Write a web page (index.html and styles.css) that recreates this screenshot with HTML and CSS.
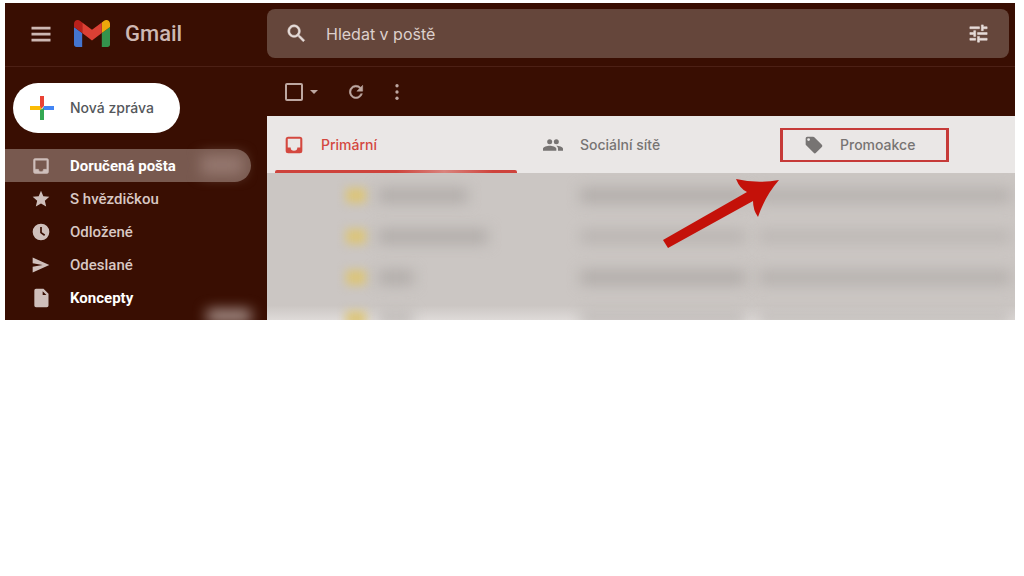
FILE: index.html
```html
<!DOCTYPE html>
<html lang="cs">
<head>
<meta charset="utf-8">
<meta name="viewport" content="width=device-width, initial-scale=1">
<title>Gmail</title>
<link rel="stylesheet" href="styles.css">
</head>
<body>
<div class="app">
  <header class="header">
    <div class="brand">
      <button class="icon-button menu-button" aria-label="Hlavní nabídka"><svg class="icon" viewBox="0 0 24 24"><path d="M2.500 4.800h19v2.600h-19zM2.500 10.800h19v2.600h-19zM2.500 16.800h19v2.600h-19z"/></svg></button>
      <svg class="logo" viewBox="52 42 88 66" aria-hidden="true"><path fill="#4475d0" d="M58 108h14V74L52 59v43c0 3.320 2.690 6 6 6"/><path fill="#34934c" d="M120 108h14c3.320 0 6-2.690 6-6V59l-20 15"/><path fill="#eda90c" d="M120 48v26l20-15v-8c0-7.420-8.470-11.650-14.400-7.200"/><path fill="#dc4034" d="M72 74V48l24 18 24-18v26L96 92"/><path fill="#b9201b" d="M52 51v8l20 15V48l-5.600-4.200c-5.940-4.450-14.400-.22-14.400 7.200"/></svg>
      <span class="brand-name">Gmail</span>
    </div>
    <form class="search" role="search">
      <button type="button" class="icon-button" aria-label="Hledat"><svg class="icon bold" viewBox="0 0 24 24"><path d="M15.500 14h-.8l-.3-.3A6.500 6.500 0 1 0 13.700 14.400l.3.3v.8l5 5 1.500-1.500zM9.500 14a4.500 4.500 0 1 1 0-9 4.500 4.500 0 0 1 0 9z"/></svg></button>
      <input class="search-input" type="text" placeholder="Hledat v poště" aria-label="Hledat v poště">
      <button type="button" class="icon-button" aria-label="Možnosti vyhledávání"><svg class="icon bold" viewBox="0 0 24 24"><path d="M3 17v2h6v-2zM3 5v2h10V5zM13 21v-2h8v-2h-8v-2h-2v6zM7 9v2H3v2h4v2h2V9zM21 13v-2H11v2zM15 9h2V7h4V5h-4V3h-2z"/></svg></button>
    </form>
  </header>
  <div class="body">
    <aside class="sidebar">
      <button class="compose"><svg class="plus" viewBox="0 0 26 26" aria-hidden="true"><path fill="#ea4335" d="M11 1h4v10l-4 4z"/><path fill="#fbbc04" d="M1 11h10l2 4H1z"/><path fill="#4285f4" d="M15 11h10v4H13z"/><path fill="#34a853" d="M11 15l4-2v12h-4z"/></svg>Nová zpráva</button>
      <nav class="nav">
        <a class="nav-item active" href="#"><svg class="icon bold" viewBox="0 0 24 24"><path d="M19 3H5a2 2 0 0 0-2 2v14a2 2 0 0 0 2 2h14a2 2 0 0 0 2-2V5a2 2 0 0 0-2-2zm0 13h-4a3 3 0 0 1-6 0H5V5h14z"/></svg>Doručená pošta<span class="count-smudge"></span></a>
        <a class="nav-item" href="#"><svg class="icon" viewBox="0 0 24 24"><path d="M12 17.300l6.200 3.700-1.600-7 5.400-4.700-7.200-.6L12 2 9.200 8.700 2 9.300 7.400 14l-1.600 7z"/></svg>S hvězdičkou</a>
        <a class="nav-item" href="#"><svg class="icon" viewBox="0 0 24 24"><path fill-rule="evenodd" d="M12 2a10 10 0 1 0 0 20 10 10 0 0 0 0-20zM11 6h2v6.200l4 2.800-1.200 1.700L11 13.200z"/></svg>Odložené</a>
        <a class="nav-item" href="#"><svg class="icon" viewBox="0 0 24 24"><path d="M2 3l20 9L2 21v-7l12-2L2 10z"/></svg>Odeslané</a>
        <a class="nav-item unread" href="#"><svg class="icon" viewBox="0 0 24 24"><path fill-rule="evenodd" d="M6 1a2 2 0 0 0-2 2v18a2 2 0 0 0 2 2h13a2 2 0 0 0 2-2V7l-6-6zM14 4l4.500 4.500H14z"/></svg>Koncepty<span class="draft-smudge"></span></a>
      </nav>
    </aside>
    <main class="main">
      <div class="toolbar">
        <input class="select-all" type="checkbox" aria-label="Vybrat vše">
        <button class="icon-button caret" aria-label="Možnosti výběru"><svg viewBox="0 0 10 6"><path d="M1 1h8L5 5z"/></svg></button>
        <button class="icon-button refresh" aria-label="Obnovit"><svg class="icon bold" viewBox="0 0 24 24"><path d="M17.700 6.300A8 8 0 1 0 19.700 14h-2.100A6 6 0 1 1 16.200 7.800L13 11h7V4z"/></svg></button>
        <button class="icon-button" aria-label="Více"><svg class="icon" viewBox="0 0 24 24"><circle cx="12" cy="4.500" r="2"/><circle cx="12" cy="12" r="2"/><circle cx="12" cy="19.500" r="2"/></svg></button>
      </div>
      <div class="tabs" role="tablist">
        <button class="tab selected" role="tab" aria-selected="true"><svg class="icon" viewBox="0 0 24 24"><path d="M19 2H5a3 3 0 0 0-3 3v14a3 3 0 0 0 3 3h14a3 3 0 0 0 3-3V5a3 3 0 0 0-3-3zm.5 13H16a4 4 0 0 1-8 0H4.500V4.500h15z"/></svg>Primární</button>
        <button class="tab" role="tab"><svg class="icon" viewBox="0 0 24 24"><circle cx="8" cy="8" r="3"/><circle cx="16" cy="8" r="3"/><path d="M0 19v-2.500C0 14 5 12.800 8 12.800s8 1.200 8 3.700V19zM18 19v-2.500c0-1.500-.8-2.600-2-3.600 3 0 8 1.200 8 3.600V19z"/></svg>Sociální sítě</button>
        <button class="tab" role="tab"><span class="highlight"><svg class="icon" viewBox="0 0 24 24"><path fill-rule="evenodd" d="M21.400 11.600l-9-9A2 2 0 0 0 11 2H4a2 2 0 0 0-2 2v7c0 .6.200 1 .6 1.400l9 9a2 2 0 0 0 2.800 0l7-7a2 2 0 0 0 0-2.800zM5.500 7.200a1.700 1.700 0 1 1 0-3.400 1.700 1.700 0 0 1 0 3.400z"/></svg>Promoakce</span></button>
      </div>
      <div class="mail-list" aria-hidden="true">
        <div class="mail"><i class="tag"></i><i class="sender medium"></i><i class="subject"></i><i class="excerpt"></i></div>
        <div class="mail"><i class="tag"></i><i class="sender"></i><i class="subject light"></i><i class="excerpt light"></i></div>
        <div class="mail"><i class="tag"></i><i class="sender short"></i><i class="subject"></i><i class="excerpt"></i></div>
        <div class="mail"><i class="tag"></i><i class="sender short light"></i><i class="subject light"></i><i class="excerpt light"></i></div>
      </div>
      <svg class="arrow" viewBox="0 0 116 70" aria-hidden="true"><path d="M0 61L84 13Q77 10 73 0Q94 5 116 1Q102 17 95 38Q90 31 90 22L5 69z"/></svg>
    </main>
  </div>
</div>
</body>
</html>
```
FILE: styles.css
```css
* { box-sizing: border-box; }
body {
  margin: 0;
  padding: 3px 9px 0 5px;
  background: #fff;
  font-family: Roboto, "Liberation Sans", sans-serif;
}
button, input { font: inherit; }
button { border: 0; padding: 0; background: none; cursor: pointer; }
.app { overflow: hidden; background: #390e02; color: #d4c4c0; }
.icon { display: block; width: 20px; height: 20px; flex: none; fill: currentColor; }
.bold { stroke: currentColor; stroke-width: 0.6; }
.icon-button { display: flex; align-items: center; color: inherit; }

.header {
  display: grid;
  grid-template-columns: 262px 1fr;
  padding: 6px 6px 8px 0;
  border-bottom: 1px solid #4c2015;
}
.brand { display: flex; align-items: center; padding-left: 24px; color: #cdb8b3; }
.menu-button .icon { width: 24px; height: 24px; }
.logo { width: 36px; height: 27px; margin: 0 15px 0 21px; }
.brand-name { font: 500 22px/28px Roboto, sans-serif; }
.search {
  display: flex;
  align-items: center;
  height: 49px;
  padding: 0 19px 0 18px;
  border-radius: 8px;
  background: #65463b;
  color: #e6dcd9;
}
.search .icon { width: 23px; height: 23px; }
.search-input {
  flex: 1;
  min-width: 0;
  margin-left: 18px;
  padding: 0;
  border: 0;
  outline: 0;
  background: none;
  color: #e6dcd9;
  font: 16px/24px Inter, sans-serif;
}
.search-input::placeholder { color: #ddd0cc; opacity: 1; }

.body { display: grid; grid-template-columns: 262px 1fr; }
.sidebar { padding-top: 16px; }
.compose {
  display: flex;
  align-items: center;
  gap: 15px;
  height: 50px;
  margin: 0 0 16px 8px;
  padding: 0 26px 0 16px;
  border-radius: 25px;
  background: #fff;
  color: #54575b;
  font: 500 14px/20px Inter, sans-serif;
}
.plus { width: 26px; height: 26px; }
.nav-item {
  position: relative;
  display: flex;
  align-items: center;
  gap: 19px;
  height: 33px;
  margin-right: 16px;
  padding-left: 26px;
  border-radius: 0 17px 17px 0;
  color: #d8c8c4;
  font-size: 15px;
  font-weight: 500;
  text-decoration: none;
}
.nav-item .icon { color: #cfbfbb; }
.nav-item.active { background: #78594f; color: #fff; font-weight: 700; }
.nav-item.unread { color: #fff; font-weight: 700; }
.count-smudge, .draft-smudge { position: absolute; filter: blur(7px); }
.count-smudge { right: 8px; top: 6px; width: 42px; height: 20px; background: #95786f; }
.draft-smudge { right: 0; top: 29px; width: 44px; height: 12px; background: #b7a49f; }

.main { position: relative; min-width: 0; }
.toolbar { display: flex; align-items: center; height: 49px; padding-left: 18px; color: #bda7a1; }
.select-all {
  appearance: none;
  width: 18px;
  height: 18px;
  margin: 0;
  border: 2px solid #bda7a1;
  border-radius: 2px;
}
.caret { width: 10px; margin: 0 27px 0 6px; }
.caret svg { width: 10px; height: 6px; fill: currentColor; }
.refresh { margin-right: 21px; }
.tabs { display: grid; grid-template-columns: 259px 260px 1fr; height: 57px; background: #eae7e6; }
.tab {
  position: relative;
  display: flex;
  align-items: center;
  gap: 17px;
  padding-left: 17px;
  color: #777473;
  font: 500 14px/20px Inter, sans-serif;
}
.selected { color: #d4483f; }
.selected::after {
  content: "";
  position: absolute;
  inset: auto 9px 0 8px;
  height: 3px;
  border-radius: 2px 2px 0 0;
  background: linear-gradient(90deg, #ce433c 50%, #d9837d 70%, #ce433c 90%);
}
.highlight {
  display: flex;
  align-items: center;
  gap: 16px;
  height: 34px;
  margin-left: -23px;
  padding: 0 31px 0 21px;
  border: solid #c63a38;
  border-width: 2px 3px;
}
.mail-list {
  height: 147px;
  overflow: hidden;
  background: linear-gradient(#cbc6c3 90%, #dedad8);
}
.mail {
  display: grid;
  grid-template-columns: 20px 110px 1fr 2fr;
  column-gap: 12px;
  align-items: center;
  height: 41px;
  padding: 4px 4px 0 79px;
}
.mail i { height: 15px; background: #b2adaa; filter: blur(7px); }
.mail .tag { background: #dcc579; filter: blur(5px); }
.mail .medium { width: 90px; }
.mail .short { width: 36px; }
.mail .subject { margin-left: 80px; margin-right: -80px; }
.mail .excerpt { margin-left: 80px; background: #b7b2af; }
.mail .light { opacity: .65; }
.arrow { position: absolute; left: 396px; top: 112px; width: 116px; height: 70px; fill: #c41109; }
```
